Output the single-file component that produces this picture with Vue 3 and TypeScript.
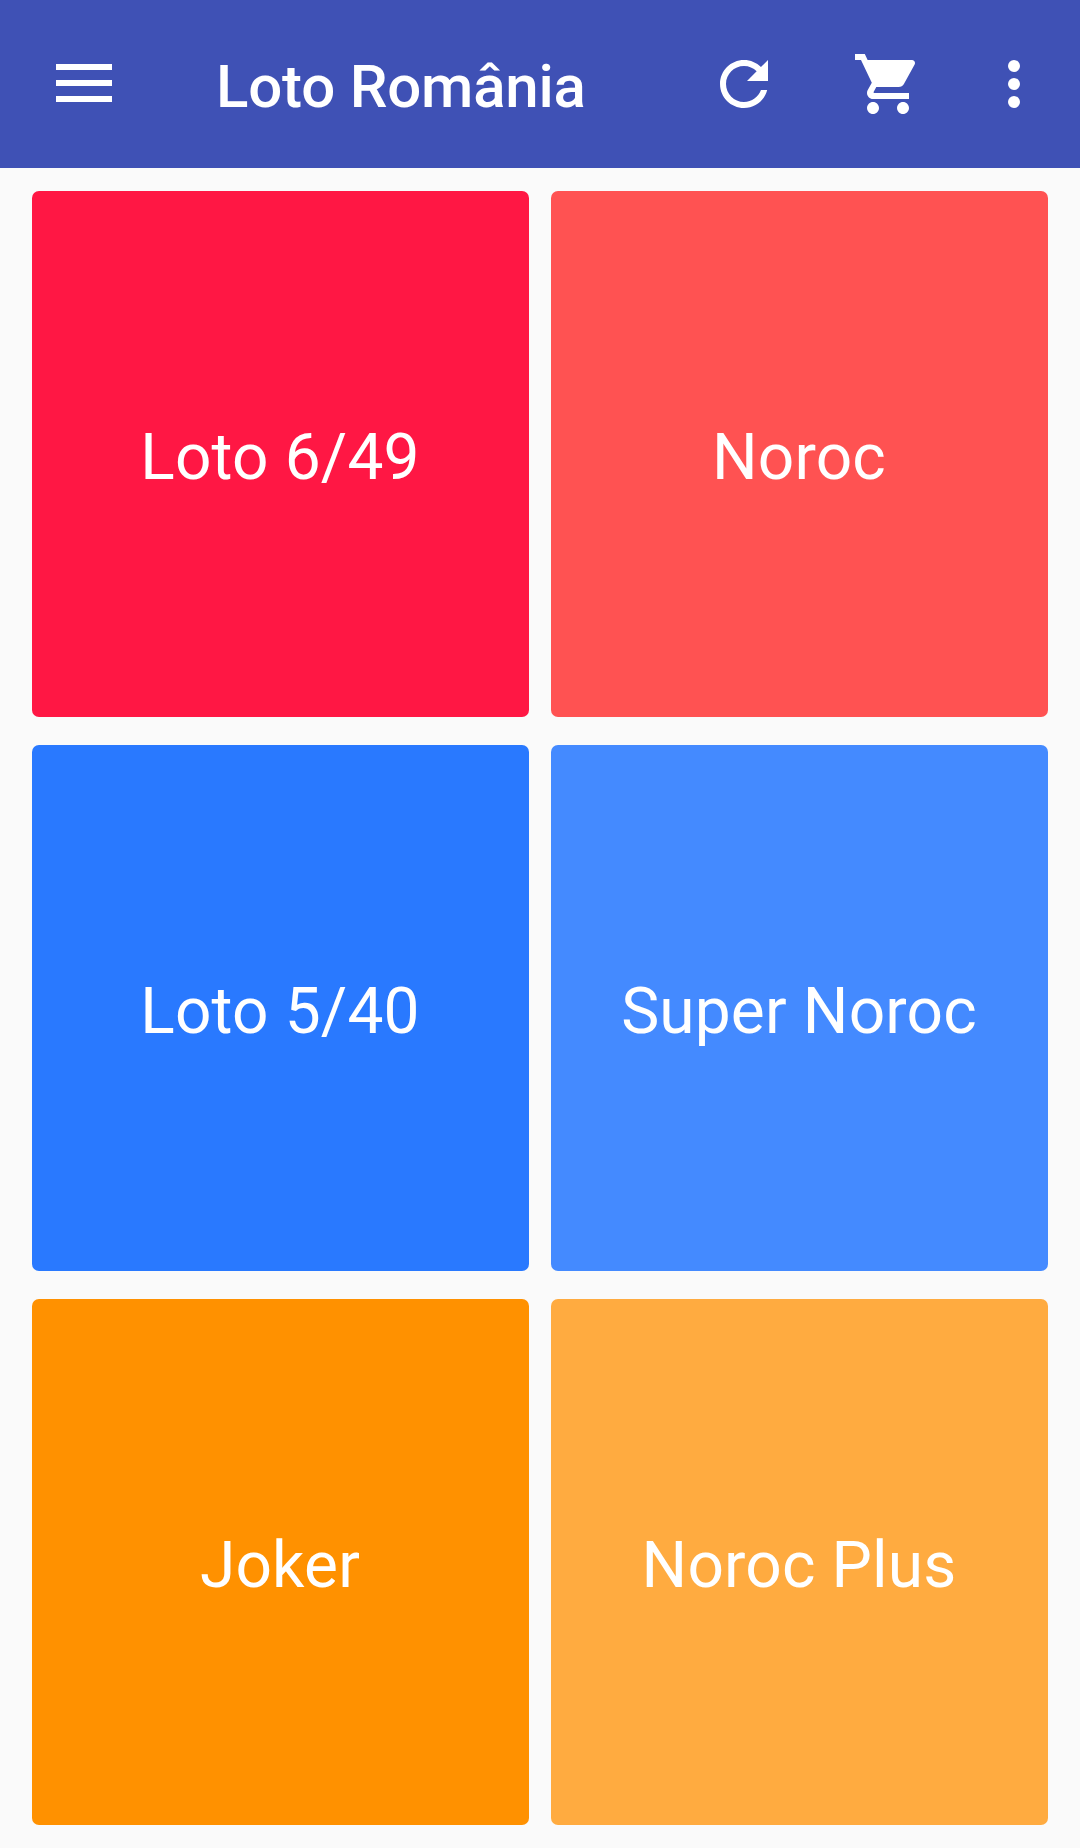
<script setup lang="ts">
interface Game {
  name: string
  tone: string
}

const games: Game[] = [
  { name: 'Loto 6/49', tone: 'red' },
  { name: 'Noroc', tone: 'red-light' },
  { name: 'Loto 5/40', tone: 'blue' },
  { name: 'Super Noroc', tone: 'blue-light' },
  { name: 'Joker', tone: 'orange' },
  { name: 'Noroc Plus', tone: 'orange-light' },
]
</script>

<template>
  <div class="screen">
    <header class="toolbar">
      <button class="menu" aria-label="Meniu">
        <svg width="56" height="38" viewBox="0 0 56 38" fill="currentColor">
          <path d="M0 0h56v6H0zM0 16h56v6H0zM0 32h56v6H0z" />
        </svg>
      </button>
      <h1 class="title">Loto România</h1>
      <button class="refresh" aria-label="Reîncarcă">
        <svg width="72" height="72" viewBox="0 0 24 24" fill="currentColor">
          <path d="M17.65 6.35C16.2 4.9 14.21 4 12 4c-4.42 0-7.99 3.58-7.99 8s3.57 8 7.99 8c3.73 0 6.84-2.55 7.73-6h-2.08c-.82 2.33-3.04 4-5.65 4-3.31 0-6-2.69-6-6s2.69-6 6-6c1.66 0 3.14.69 4.22 1.78L13 11h7V4l-2.35 2.35z" />
        </svg>
      </button>
      <button class="cart" aria-label="Coș">
        <svg width="72" height="72" viewBox="0 0 24 24" fill="currentColor">
          <path d="M7 18c-1.1 0-1.99.9-1.99 2S5.9 22 7 22s2-.9 2-2-.9-2-2-2zM1 2v2h2l3.6 7.59-1.35 2.45c-.16.28-.25.61-.25.96 0 1.1.9 2 2 2h12v-2H7.42c-.14 0-.25-.11-.25-.25l.03-.12.9-1.63h7.45c.75 0 1.41-.41 1.75-1.03l3.58-6.49c.08-.14.12-.31.12-.48 0-.55-.45-1-1-1H5.21l-.94-2H1zm16 16c-1.1 0-1.99.9-1.99 2s.89 2 1.99 2 2-.9 2-2-.9-2-2-2z" />
        </svg>
      </button>
      <button class="more" aria-label="Mai multe">
        <svg width="72" height="72" viewBox="0 0 24 24" fill="currentColor">
          <circle cx="12" cy="6" r="2" />
          <circle cx="12" cy="12" r="2" />
          <circle cx="12" cy="18" r="2" />
        </svg>
      </button>
    </header>
    <main class="grid">
      <div v-for="game in games" :key="game.name" class="card" :class="game.tone">
        <span class="label">{{ game.name }}</span>
      </div>
    </main>
  </div>
</template>

<style>
body {
  margin: 0;
  background: #fafafa;
}
</style>

<style scoped>
.screen {
  width: 1080px;
  height: 1848px;
  overflow: hidden;
  background: #fafafa;
  color: #fff;
  font-family: Roboto, sans-serif;
}

.toolbar {
  display: flex;
  align-items: center;
  box-sizing: border-box;
  height: 168px;
  padding: 0 30px 0 56px;
  background: #3f51b5;
}

button {
  display: flex;
  padding: 0;
  border: 0;
  background: none;
  color: inherit;
}

.menu {
  margin: 0 104px 2px 0;
}

.title {
  flex: 1;
  margin: 6px 0 0;
  font-size: 60px;
  font-weight: 500;
  line-height: 70px;
  letter-spacing: -0.2px;
  white-space: nowrap;
}

.cart {
  margin-left: 72px;
}

.more {
  margin-left: 54px;
}

.grid {
  display: grid;
  grid-template-columns: 497px 497px;
  grid-auto-rows: 526px;
  gap: 28px 22px;
  padding: 23px 32px;
}

.card {
  display: flex;
  align-items: center;
  justify-content: center;
  box-sizing: border-box;
  padding: 8px 1px 0 0;
  border-radius: 7px;
}

.label {
  font-size: 64px;
  line-height: 76px;
  letter-spacing: 0.15px;
  white-space: nowrap;
}

.red { background: #ff1744; }
.red-light { background: #ff5252; }
.blue { background: #2979ff; }
.blue-light { background: #448aff; }
.orange { background: #ff9100; }
.orange-light { background: #ffab40; }
</style>
